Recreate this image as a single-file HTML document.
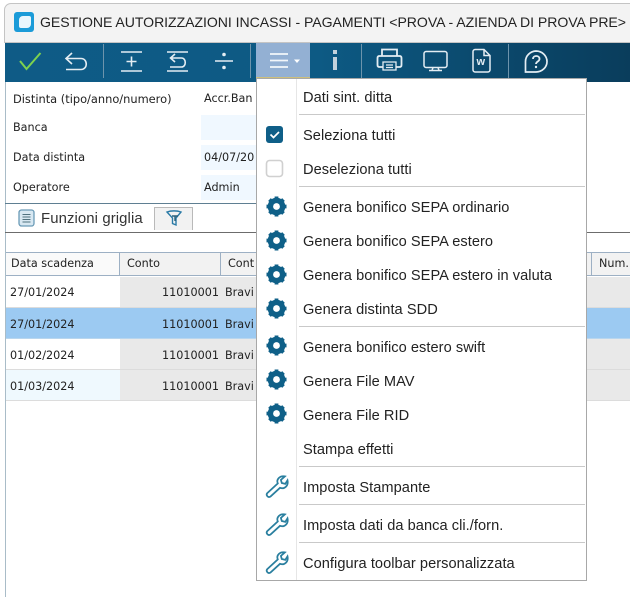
<!DOCTYPE html>
<html><head><meta charset="utf-8">
<style>
html,body{margin:0;padding:0;background:#fff}
body{width:630px;height:597px;position:relative;overflow:hidden;font-family:"Liberation Sans",sans-serif;color:#1a1a1a}
.a{position:absolute;white-space:nowrap}
.g{font-family:"DejaVu Sans",sans-serif;font-size:11.2px;color:#222}
.m{font-size:14.6px;color:#222;left:303px;letter-spacing:.05px}
.sep{position:absolute;left:299px;width:286px;height:1px;background:#c9c9c9}
.row{position:absolute;left:6px;width:624px;height:31px;border-bottom:1px solid #dcdcdc;box-sizing:border-box}
.c{position:absolute;left:114px;top:0;bottom:0;right:0;background:#e9e9e9}
.tb{position:absolute;top:44px;width:1px;height:34px;background:#6d94ac}
</style></head><body>
<div class="a" style="left:4px;top:3px;width:626px;height:40px;background:#f3f3f3;border:1px solid #c4c4c4;border-right:0;border-radius:7px 0 0 0;box-sizing:border-box"></div>
<div class="a" style="left:14px;top:12px;width:20px;height:20px;background:#1b9bd8;border-radius:3px"></div>
<div class="a" style="left:19px;top:16px;width:12px;height:12px;background:#e9f6fd;border-radius:4px 2px 4px 2px"></div>
<svg class="a" style="left:0;top:0" width="630" height="43"><text x="40" y="27" font-family="Liberation Sans, sans-serif" font-size="14.08" fill="#222" textLength="586" lengthAdjust="spacing">GESTIONE AUTORIZZAZIONI INCASSI - PAGAMENTI &lt;PROVA - AZIENDA DI PROVA PRE&gt;</text></svg>

<div class="a" style="left:5px;top:43px;width:625px;height:39px;background:linear-gradient(90deg,#0f5b86 0%,#0d5a84 50%,#0b4a6e 75%,#0a3d5c 100%)"></div>
<div class="a" style="left:256px;top:43px;width:54px;height:34px;background:#93b0d3"></div>
<div class="a" style="left:256px;top:77px;width:54px;height:1px;background:#cdbf7c"></div>
<div class="tb" style="left:103px"></div><div class="tb" style="left:250px"></div><div class="tb" style="left:361px"></div><div class="tb" style="left:508px"></div>

<svg class="a" style="left:0;top:0" width="630" height="90" fill="none" stroke="#e4edf3" stroke-width="1.6">
<path d="M20 61l6.500 8 14-16" stroke="#7ed24e" stroke-width="2"/>
<path d="M72 53l-6 5.500 6 5.500M66 58.500h15c7 0 7 11 0 11H66"/>
<path d="M121 52h21M121 71h21M131.500 56.500v10M126.500 61.500h10"/>
<path d="M167 52h21M167 71h21M175 54l-4.500 4 4.500 4M170.500 58h11c5 0 5 9 0 9H170"/>
<path d="M215 61h18"/>
<circle cx="224" cy="54.500" r="1.800" fill="#e4edf3" stroke="none"/><circle cx="224" cy="67.500" r="1.800" fill="#e4edf3" stroke="none"/>
<path d="M270 54h18M270 60.500h18M270 67h18" stroke="#f2f6fa" stroke-width="1.800"/>
<path d="M294 59.500h6l-3 3.500z" fill="#fff" stroke="none"/>
<path d="M335 50v4M335 57v13" stroke="#c3d2dc" stroke-width="4"/>
<g stroke="#e4edf3" stroke-width="1.800">
<path d="M382 56v-6.500h15V56M383 67h-3.500c-1.500 0-2-1-2-2v-7c0-1.500 1-2 2-2h20c1.500 0 2 1 2 2v7c0 1-.5 2-2 2H396"/>
<path d="M383 62h13v8h-13zM386 65h7M386 67.500h7" stroke-width="1.300"/>
</g>
<path d="M426 51.500h19c1 0 2 1 2 2v12c0 1-1 2-2 2h-19c-1 0-2-1-2-2v-12c0-1 1-2 2-2zM433 67.500l-1 3M438 67.500l1 3M429 70.500h13" stroke-width="1.500"/>
<path d="M475 49.500h9l6 6v14.500c0 1-1 2-2 2h-13c-1 0-2-1-2-2V51.500c0-1 1-2 2-2zM484 49.500v6h6" stroke-width="1.500"/>
<path d="M536 51a11 10.500 0 1 1 0 21h-10.500V61.500a11 10.500 0 0 1 10.500-10.500z" stroke-width="1.700"/>
<path d="M533 59c0-4 6.500-4 6.500 0 0 2.500-3.500 2.500-3.500 5" stroke-width="1.800"/>
<circle cx="536" cy="67" r="1.200" fill="#e4edf3" stroke="none"/>
</svg>
<div class="a" style="left:476.500px;top:57px;font:bold 11px/10px 'Liberation Sans',sans-serif;color:#e4edf3">w</div>

<!-- form -->
<div class="a" style="left:5px;top:82px;width:1px;height:515px;background:#a9bcc8"></div>
<div class="a g" style="left:13px;top:92px;font-size:11.4px">Distinta (tipo/anno/numero)</div>
<div class="a g" style="left:204px;top:92px">Accr.Ban</div>
<div class="a" style="left:201px;top:115px;width:55px;height:25px;background:#f0f8ff"></div>
<div class="a g" style="left:13px;top:121px">Banca</div>
<div class="a" style="left:201px;top:145px;width:55px;height:25px;background:#f0f8ff"></div>
<div class="a g" style="left:13px;top:151px">Data distinta</div>
<div class="a g" style="left:204px;top:151px">04/07/20</div>
<div class="a" style="left:201px;top:175px;width:55px;height:25px;background:#f0f8ff"></div>
<div class="a g" style="left:13px;top:181px">Operatore</div>
<div class="a g" style="left:204px;top:181px">Admin</div>
<div class="a" style="left:5px;top:203px;width:251px;height:1px;background:#5f7f92"></div>

<svg class="a" style="left:18px;top:209px" width="18" height="18" fill="none"><rect x="1" y="1" width="15" height="16" rx="2.500" fill="#d8e8f2" stroke="#6b9bb7" stroke-width="1.300"/><path d="M4.500 5.500h8M4.500 8h8M4.500 10.500h8M4.500 13h8" stroke="#51727f" stroke-width="1.100"/></svg>
<div class="a" style="left:41px;top:211px;font-size:14.900px;color:#333;letter-spacing:.1px">Funzioni griglia</div>
<div class="a" style="left:154px;top:207px;width:39px;height:23px;background:#f2f2f2;border:1px solid #b9b9b9;border-bottom:0;box-sizing:border-box"></div>
<svg class="a" style="left:165px;top:210px" width="20" height="18" fill="none" stroke="#2a7aa6" stroke-width="1.400"><path d="M2 2c4-1.500 10-1.500 14 0l-5 6v7l-3.500-1.500V8z"/><path d="M7 6h6M10 6v5" stroke="#2a5f7a"/></svg>
<div class="a" style="left:5px;top:232px;width:625px;height:1px;background:#6c6c6c"></div>

<!-- grid -->
<div class="a" style="left:6px;top:252px;width:624px;height:24px;background:#f2f2f2;border-top:1px solid #9db0c4;border-bottom:1px solid #9db0c4;box-sizing:border-box"></div>
<div class="a" style="left:6px;top:253px;width:113px;height:22px;background:#fafafa"></div>
<div class="a" style="left:119px;top:252px;width:1px;height:24px;background:#9db0c4"></div>
<div class="a" style="left:220px;top:252px;width:1px;height:24px;background:#9db0c4"></div>
<div class="a" style="left:591px;top:252px;width:1px;height:24px;background:#9db0c4"></div>
<div class="a g" style="left:11px;top:257px">Data scadenza</div>
<div class="a g" style="left:127px;top:257px">Conto</div>
<div class="a g" style="left:228px;top:257px">Cont</div>
<div class="a g" style="left:599px;top:257px">Num.</div>

<div class="row" style="top:277px;background:#fff"><div class="c"></div></div>
<div class="row" style="top:308px;background:#9ccaf2;border-bottom-color:#b9d6ee"></div>
<div class="row" style="top:339px;background:#fff"><div class="c"></div></div>
<div class="row" style="top:370px;background:#eff9fe"><div class="c"></div></div>

<div class="a g" style="left:10px;top:286px">27/01/2024</div><div class="a g" style="left:162px;top:286px">11010001</div><div class="a g" style="left:225px;top:286px">Bravi</div>
<div class="a g" style="left:10px;top:318px">27/01/2024</div><div class="a g" style="left:162px;top:318px">11010001</div><div class="a g" style="left:225px;top:318px">Bravi</div>
<div class="a g" style="left:10px;top:349px">01/02/2024</div><div class="a g" style="left:162px;top:349px">11010001</div><div class="a g" style="left:225px;top:349px">Bravi</div>
<div class="a g" style="left:10px;top:380px">01/03/2024</div><div class="a g" style="left:162px;top:380px">11010001</div><div class="a g" style="left:225px;top:380px">Bravi</div>

<!-- menu -->
<div class="a" style="left:256px;top:78px;width:331px;height:503px;background:#fff;border:1px solid #a8a8a8;box-sizing:border-box"></div>
<div class="a" style="left:296px;top:79px;width:1px;height:501px;background:#e6e6e6"></div>
<div class="sep" style="top:114px"></div><div class="sep" style="top:186px"></div><div class="sep" style="top:326px"></div><div class="sep" style="top:466px"></div><div class="sep" style="top:504px"></div><div class="sep" style="top:542px"></div>

<div class="a m" style="top:90px">Dati sint. ditta</div>
<div class="a m" style="top:128px">Seleziona tutti</div>
<div class="a m" style="top:162px">Deseleziona tutti</div>
<div class="a m" style="top:200px">Genera bonifico SEPA ordinario</div>
<div class="a m" style="top:234px">Genera bonifico SEPA estero</div>
<div class="a m" style="top:268px">Genera bonifico SEPA estero in valuta</div>
<div class="a m" style="top:302px">Genera distinta SDD</div>
<div class="a m" style="top:340px">Genera bonifico estero swift</div>
<div class="a m" style="top:374px">Genera File MAV</div>
<div class="a m" style="top:408px">Genera File RID</div>
<div class="a m" style="top:442px">Stampa effetti</div>
<div class="a m" style="top:480px">Imposta Stampante</div>
<div class="a m" style="top:518px">Imposta dati da banca cli./forn.</div>
<div class="a m" style="top:556px">Configura toolbar personalizzata</div>

<svg class="a" style="left:256px;top:110px" width="40" height="487">
<defs>
<g id="gear"><circle r="6.300" fill="none" stroke="#0f6088" stroke-width="5"/><g stroke="#0f6088" stroke-width="3.800"><path d="M0-10V10M-10 0H10M-7-7L7 7M-7 7L7-7"/></g><circle r="3.400" fill="#fff"/></g>
<g id="wr" fill="none" stroke="#2a7f9f" stroke-width="2"><path transform="scale(.88)" d="M-10.500 7.500L1.500-3.500C-.5-8 3.500-12.500 9.500-11.500L5-7.500 6-4 10-3 12.500-7C14-1 9 3.500 4 1.500L-7 11.500C-9.500 13-12.500 10-10.500 7.500Z"/></g>
</defs>
<rect x="10" y="16" width="17" height="17" rx="3" fill="#0f5f88"/>
<path d="M14.500 24.500l3 3 5.500-5.500" fill="none" stroke="#fff" stroke-width="1.700"/>
<rect x="10.500" y="50.500" width="16" height="16" rx="3" fill="#fff" stroke="#d0d0d0" stroke-width="1.600"/>
<use href="#gear" x="20.500" y="96.500"/>
<use href="#gear" x="20.500" y="130.500"/>
<use href="#gear" x="20.500" y="164.500"/>
<use href="#gear" x="20.500" y="198.500"/>
<use href="#gear" x="20.500" y="235.500"/>
<use href="#gear" x="20.500" y="269.500"/>
<use href="#gear" x="20.500" y="303.500"/>
<use href="#wr" x="20.500" y="376.500"/>
<use href="#wr" x="20.500" y="414.500"/>
<use href="#wr" x="20.500" y="452.500"/>
</svg>
</body></html>
